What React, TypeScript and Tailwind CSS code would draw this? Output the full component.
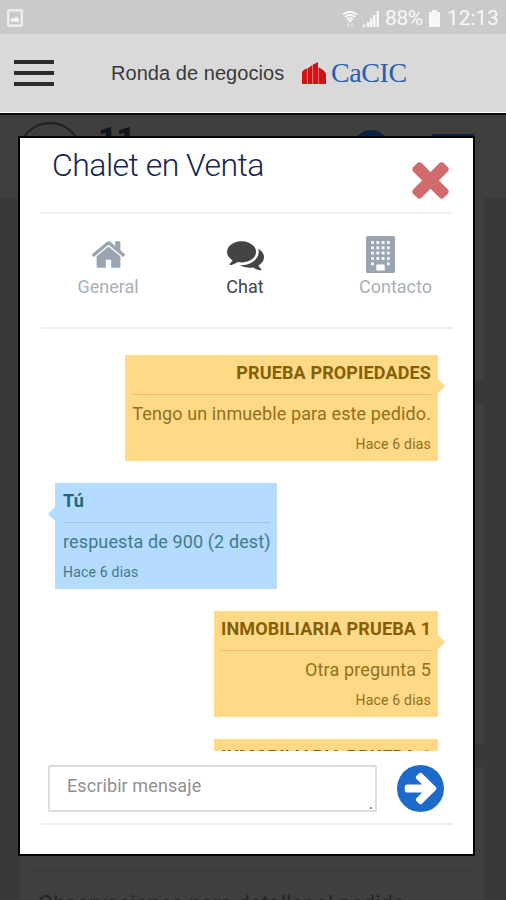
import React from 'react';

interface IconProps {
    className?: string;
    d: string;
}

interface Message {
    author: string;
    text: string;
    time: string;
    own?: boolean;
    width: string;
}

const icons = {
    close: 'M1490 1322q0 40-28 68l-136 136q-28 28-68 28t-68-28l-294-294-294 294q-28 28-68 28t-68-28l-136-136q-28-28-28-68t28-68l294-294-294-294q-28-28-28-68t28-68l136-136q28-28 68-28t68 28l294 294 294-294q28-28 68-28t68 28l136 136q28 28 28 68t-28 68l-294 294 294 294q28 28 28 68z',
    home: 'M1472 992v480q0 26-19 45t-45 19h-384v-384h-256v384h-384q-26 0-45-19t-19-45v-480q0-1 .5-3t.5-3l575-474 575 474q1 2 1 6zm223-69l-62 74q-8 9-21 11h-3q-13 0-21-7l-692-577-692 577q-12 8-24 7-13-2-21-11l-62-74q-8-10-7-23.500t11-21.500l719-599q32-26 76-26t76 26l244 204v-195q0-14 9-23t23-9h192q14 0 23 9t9 23v408l219 182q10 8 11 21.500t-7 23.500z',
    comments: 'M1408 768q0 139-94 257t-256.500 186.500-353.500 68.500q-86 0-176-16-124 88-278 128-36 9-86 16h-3q-11 0-20.500-8t-11.500-21q-1-3-1-6.500t.5-6.500 2-6l2.500-5 3.500-5.500 4-5 4.500-5 4-4.500q5-6 23-25t26-29.500 22.500-29 25-38.500 20.500-44q-124-72-195-177t-71-224q0-139 94-257t256.500-186.500 353.500-68.500 353.500 68.500 256.500 186.500 94 257zm384 256q0 120-71 224.500t-195 176.500q10 24 20.500 44t25 38.500 22.500 29 26 29.500 23 25q1 1 4 4.500t4.500 5 4 5 3.500 5.500l2.500 5 2 6 .5 6.500-1 6.500q-3 14-13 22t-22 7q-50-7-86-16-154-40-278-128-90 16-176 16-271 0-472-132 58 4 88 4 161 0 309-45t264-129q125-92 192-212t67-254q0-77-23-152 129 71 204 178t75 230z',
    send: 'M1413 896q0-27-18-45l-91-91-362-362q-18-18-45-18t-45 18l-91 91q-18 18-18 45t18 45l189 189h-502q-26 0-45 19t-19 45v128q0 26 19 45t45 19h502l-189 189q-19 19-19 45t19 45l91 91q18 18 45 18t45-18l362-362 91-91q18-18 18-45zm251 0q0 209-103 385.500t-279.500 279.500-385.500 103-385.500-103-279.500-279.500-103-385.500 103-385.500 279.500-279.500 385.500-103 385.500 103 279.500 279.500 103 385.500z',
};

const messages: Message[] = [
    { author: 'PRUEBA PROPIEDADES', text: 'Tengo un inmueble para este pedido.', time: 'Hace 6 dias', width: 'w-[313px]' },
    { author: 'Tú', text: 'respuesta de 900 (2 dest)', time: 'Hace 6 dias', own: true, width: 'w-[222px]' },
    { author: 'INMOBILIARIA PRUEBA 1', text: 'Otra pregunta 5', time: 'Hace 6 dias', width: 'w-[224px]' },
    { author: 'INMOBILIARIA PRUEBA 1', text: 'Otra pregunta 4', time: 'Hace 6 dias', width: 'w-[224px]' },
];

const Icon: React.FC<IconProps> = ({ className, d }) => (
    <svg viewBox="0 0 1792 1792" fill="currentColor" className={className}>
        <path d={d} />
    </svg>
);

const BuildingIcon: React.FC = () => (
    <svg viewBox="0 0 29 37" className="w-[29px] h-[37px] shrink-0">
        <rect width="29" height="37" rx="1.5" fill="#9aa5b1" />
        {[5, 10.3, 15.6, 20.9, 26.2].map((y) =>
            [5, 10.3, 15.6, 20.9].map((x) => (
                <rect key={`${x}-${y}`} x={x} y={y} width="3" height="3" rx="0.6" fill="#f4f6f8" />
            ))
        )}
        <rect x="9.5" y="25.500" width="10" height="4" fill="#9aa5b1" />
        <rect x="10.300" y="28.600" width="8.400" height="6" rx="0.5" fill="#fff" />
    </svg>
);

const StatusBar: React.FC = () => (
    <div className="flex items-center h-[34px] bg-[#cacaca] pl-[7px] pr-[7px] pt-[3px] text-[#f8f8f8]">
        <svg viewBox="0 0 16 18" className="w-4 h-[18px] mt-[-2px]">
            <rect x="1.200" y="1.200" width="13.600" height="15.600" rx="1.500" fill="none" stroke="#eee" strokeWidth="2.400" />
            <path d="M4 12.500V10l1.500-1 1.500 1 2-2.500 2 2 1 .5v2.500z" fill="currentColor" />
        </svg>
        <svg viewBox="0 0 16 18" className="w-4 h-[18px] ml-auto" fill="none" stroke="currentColor">
            <path d="M1 4.500Q8-1 15 4.500M3 7q5-4 10 0M5 9.500q3-2.500 6 0" strokeWidth="2" />
            <path d="M6 10h4l-2 3z" fill="currentColor" stroke="none" />
            <path d="M6 13.500v3M10 13.500v3" strokeWidth="1" />
        </svg>
        <svg viewBox="0 0 17 17" className="w-[17px] h-[17px] ml-[5px]" fill="currentColor">
            <path d="M0 14.500h2.500V17H0zM4 12h2.500v5H4zM7 8.500h2.500V17H7zM10 5h2.500v12H10zM13.500 1H16v16h-2.500z" />
        </svg>
        <span className="ml-[5px] text-[21px] leading-none tracking-[-0.4px] w-[40px] whitespace-nowrap">88%</span>
        <svg viewBox="0 0 11 17" className="w-[11px] h-[17px] ml-[4px]" fill="currentColor">
            <path d="M3 0h5v2h3v15H0V2h3z" />
        </svg>
        <span className="ml-[7px] text-[20.5px] leading-none w-[52px] whitespace-nowrap tracking-[0.2px]">12:13</span>
    </div>
);

const Header: React.FC = () => (
    <header className="flex items-center h-[79px] bg-[#d9d9d9] border-b border-white pl-[14px]">
        <div className="flex flex-col gap-[7px] w-10">
            <span className="h-1 bg-[#2b2b2b]" />
            <span className="h-1 bg-[#2b2b2b]" />
            <span className="h-1 bg-[#2b2b2b]" />
        </div>
        <span className="ml-[57px] w-[174px] whitespace-nowrap font-['Liberation_Sans',sans-serif] text-[20px] tracking-[0.05px] text-[#3a3a3a]">
            Ronda de negocios
        </span>
        <svg viewBox="0 0 25 22" className="ml-[16px] w-[25px] h-[22px]">
            <path d="M1 22V10q1.500-3 5-3.500V22zM6.500 22V6.500L11.500 3v19zM12 22V2.500L17 0v22zM17.500 22V5.500q6 2 7.500 6.500v10z" fill="#d31014" />
            <path d="M6.200 9v13M11.800 6v16M17.500 6v16" stroke="#dc6a6a" strokeWidth="0.8" />
        </svg>
        <span className="ml-[5px] whitespace-nowrap font-['Liberation_Serif',serif] text-[28px] tracking-[-0.4px] text-[#2560b0]">CaCIC</span>
    </header>
);

// Page behind the dimmed overlay
const Backdrop: React.FC = () => (
    <div className="h-[787px] overflow-hidden bg-[#393939] border-t-2 border-[#0c0c0c]">
        <div className="flex h-[83px] bg-[#3f3f3f] pl-[18px] pt-[7px]">
            <div className="w-16 h-16 rounded-full border-2 border-[#202020]" />
            <span className="ml-[16px] w-[38px] text-[32px] leading-[32px] font-black text-[#10141c]">11</span>
            <div className="ml-[217px] mt-[8px] w-9 h-9 rounded-full bg-[#0c2245]" />
            <div className="ml-[43px] mt-[12px] w-[42px] h-6 bg-[#0c2245]" />
        </div>
        <div className="ml-[20px] w-[464px] h-[184px] bg-[#3f3f3f]" />
        <div className="ml-[20px] mt-[22px] w-[464px] h-[339px] bg-[#3f3f3f]" />
        <div className="ml-[20px] mt-[24px] w-[464px] h-[140px] bg-[#3f3f3f] pt-[104px]">
            <div className="mx-[12px] border-t border-[#393939]" />
            <p className="pl-[6px] mt-[19px] ml-[12px] text-[22px] leading-[26px] whitespace-nowrap text-[#242424]">
                Observaciones para detallar el pedido.
            </p>
        </div>
    </div>
);

const Bubble: React.FC<Message> = ({ author, text, time, own, width }) => (
    <div
        className={`relative shrink-0 h-[106px] ${width} ${
            own ? 'self-start pl-[8px] pr-[7px] bg-[#b5dbfe] text-[#3f7a90]' : 'self-end px-[7px] bg-[#ffd985] text-[#92701c] text-right'
        }`}
    >
        <span
            className={`absolute top-[26px] w-[10px] h-[10px] rotate-45 rounded-[1px] ${
                own ? 'left-[-5px] bg-[#b5dbfe]' : 'right-[-5px] bg-[#ffd985]'
            }`}
        />
        <h3 className={`h-[39px] pt-[6px] text-[18px] leading-6 font-bold whitespace-nowrap tracking-[0.14px] ${own ? 'text-[#22697b]' : 'text-[#855f08]'}`}>
            {author}
        </h3>
        <div className={`border-t ${own ? 'border-[#9dc4e6]' : 'border-[#e5bf6c]'}`} />
        <p className="pt-[7px] text-[18px] leading-6 whitespace-nowrap tracking-[0.12px]">{text}</p>
        <p className="pt-[8px] text-[14px] leading-5 whitespace-nowrap tracking-[0.2px]">{time}</p>
    </div>
);

const Modal: React.FC = () => (
    <section className="absolute left-[18px] top-[136px] w-[457px] h-[720px] border-2 border-black bg-white px-[21px] flex flex-col">
        <div className="flex justify-between h-[76px] border-b-2 border-[#f0f0f0] pl-[11px]">
            <h1 className="pt-[8px] text-[32px] leading-[38px] font-light whitespace-nowrap tracking-[-0.53px] text-[#17264f]">Chalet en Venta</h1>
            <Icon d={icons.close} className="w-[55px] h-[55px] mt-[13px] mr-[-6px] shrink-0 text-[#d16a6c]" />
        </div>
        <nav className="flex h-[115px] border-b-2 border-[#f0f0f0] text-[18px] leading-6 text-[#a9b0b8]">
            <div className="flex flex-col items-center w-[134px] pt-[22px]">
                <Icon d={icons.home} className="w-[37px] h-[37px] text-[#9aa5b1]" />
                <span className="mt-[2px]">General</span>
            </div>
            <div className="flex flex-col items-center w-[140px] pt-[22px] text-[#444]">
                <Icon d={icons.comments} className="w-[37px] h-[37px]" />
                <span className="mt-[2px]">Chat</span>
            </div>
            <div className="flex flex-col pl-[44px] pt-[22px]">
                <div className="pl-[7px]">
                    <BuildingIcon />
                </div>
                <span className="mt-[2px]">Contacto</span>
            </div>
        </nav>
        <div className="flex flex-col gap-[22px] h-[422px] pt-[26px] pl-[14px] pr-[14px] overflow-hidden">
            {messages.map((message, index) => (
                <Bubble key={index} {...message} />
            ))}
        </div>
        <div className="flex items-center h-[74px] border-b-2 border-[#f0f0f0] pl-[7px]">
            <div className="relative w-[329px] h-[47px] mt-[2px] border-2 border-[#dcdcdc] rounded-[2px] pl-[17px] pt-[7px] text-[18px] leading-6 tracking-[0.1px] text-[#909090]">
                Escribir mensaje
                <span className="absolute right-[3px] bottom-[1px] w-[2px] h-[2px] bg-[#888]" />
            </div>
            <Icon d={icons.send} className="w-[55px] h-[55px] ml-[16px] mt-[2px] shrink-0 text-[#1d6acb]" />
        </div>
    </section>
);

const App: React.FC = () => {
    return (
        <main className="relative w-[506px] h-[900px] overflow-hidden font-[Roboto,sans-serif]">
            <StatusBar />
            <Header />
            <Backdrop />
            <Modal />
        </main>
    );
};

export default App;
